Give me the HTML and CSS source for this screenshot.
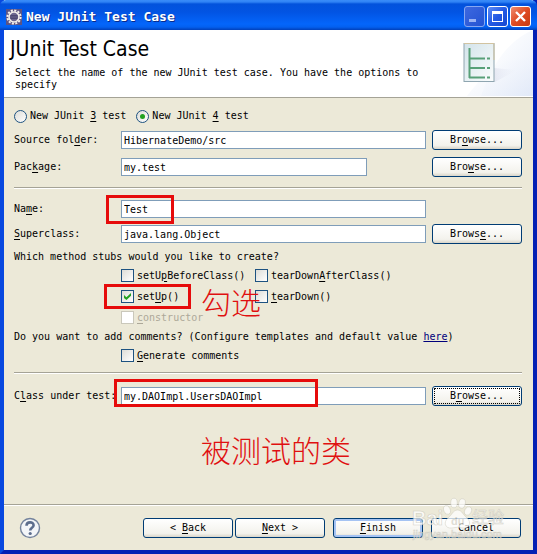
FILE: index.html
```html
<!DOCTYPE html>
<html lang="en">
  <head>
    <title>New JUnit Test Case</title>
    <meta charset="utf-8" />
    <meta name="viewport" content="width=device-width, initial-scale=1.0" />
    <link rel="stylesheet" href="styles.css">
  </head>
  <body>
    <div class="window">
      <div class="titlebar">
        <svg class="app-icon" width="16" height="16" viewBox="0 0 16 16" aria-hidden="true">
          <rect width="16" height="16" fill="#5c5484" />
          <circle cx="8" cy="8" r="6.6" fill="none" stroke="#f4f0ec" stroke-width="2" stroke-dasharray="2.1 1.356" />
          <circle cx="8" cy="8" r="5" fill="#6d6790" stroke="#f4f0ec" stroke-width="1.6" />
          <path d="M4.500 6.500h7M4 8h8M4.500 9.500h7" stroke="#45406b" stroke-width="0.8" />
        </svg>
        <span class="title">New JUnit Test Case</span>
        <div class="window-buttons">
          <button class="win-btn minimize" type="button" aria-label="Minimize">
            <svg width="19" height="19" viewBox="0 0 19 19"><rect x="4" y="12" width="7" height="3" fill="#9cb4f4" /></svg>
          </button>
          <button class="win-btn" type="button" aria-label="Maximize">
            <svg width="19" height="19" viewBox="0 0 19 19"><path d="M4 4h11v11H4zM5 7v7h9V7z" fill="#fff" fill-rule="evenodd" /></svg>
          </button>
          <button class="win-btn close" type="button" aria-label="Close">
            <svg width="19" height="19" viewBox="0 0 19 19"><path d="M5 5l9 9M14 5l-9 9" stroke="#fff" stroke-width="2.4" /></svg>
          </button>
        </div>
      </div>

      <div class="header">
        <div class="header-text">
          <h1>JUnit Test Case</h1>
          <p>Select the name of the new JUnit test case. You have the options to specify</p>
        </div>
        <svg class="banner" width="80" height="66" viewBox="0 0 80 66" aria-hidden="true">
          <defs>
            <linearGradient id="swoosh" x1="0" y1="0" x2="1" y2="1">
              <stop offset="0.2" stop-color="#fff" />
              <stop offset="1" stop-color="#dde6f7" />
            </linearGradient>
            <linearGradient id="page" x1="0" y1="0" x2="1" y2="1">
              <stop offset="0" stop-color="#d3e3ea" />
              <stop offset="1" stop-color="#fbfdfd" />
            </linearGradient>
            <linearGradient id="shade" x1="0" y1="0" x2="1" y2="0">
              <stop offset="0" stop-color="#b9b9cf" />
              <stop offset="1" stop-color="#e6ebf7" stop-opacity="0" />
            </linearGradient>
          </defs>
          <path d="M80 0Q46 14 28 66H80Z" fill="url(#swoosh)" opacity="0.7" />
          <path d="M80 21Q42 28 14 66H80Z" fill="url(#swoosh)" opacity="0.6" />
          <path d="M41 38L64 40L42 52H12Z" fill="url(#shade)" />
          <rect x="11" y="13.500" width="30" height="38" fill="url(#page)" stroke="#8fa5b0" />
          <path d="M11 13.500H41V30" fill="none" stroke="#d2c3a0" />
          <path d="M16.500 18V48M16 28.500H32M16 38H32M16 47.500H32" fill="none" stroke="#58a078" stroke-width="2" />
          <path d="M34 28.500h3M34 38h3M34 47.500h3" stroke="#58a078" stroke-width="2" />
        </svg>
      </div>

      <form class="form">
        <div class="radios">
          <label><input type="radio" name="version" />New JUnit <u>3</u> test</label>
          <label><input type="radio" name="version" checked />New JUnit <u>4</u> test</label>
        </div>

        <div class="row">
          <label for="source">Source fol<u>d</u>er:</label>
          <input type="text" id="source" value="HibernateDemo/src" />
          <button class="btn" type="button">Br<u>o</u>wse...</button>
        </div>
        <div class="row package">
          <label for="package">Pac<u>k</u>age:</label>
          <input type="text" id="package" value="my.test" />
          <button class="btn" type="button">Bro<u>w</u>se...</button>
        </div>

        <hr />

        <div class="row">
          <label for="name">Na<u>m</u>e:</label>
          <input type="text" id="name" value="Test" />
          <span class="mark mark-name"></span>
        </div>
        <div class="row superclass">
          <label for="superclass"><u>S</u>uperclass:</label>
          <input type="text" id="superclass" value="java.lang.Object" />
          <button class="btn" type="button">Brows<u>e</u>...</button>
        </div>

        <p class="question">Which method stubs would you like to create?</p>
        <div class="checks">
          <label><input type="checkbox" />setU<u>p</u>BeforeClass()</label>
          <label><input type="checkbox" />tearDown<u>A</u>fterClass()</label>
          <label><input type="checkbox" checked />set<u>U</u>p()</label>
          <label><input type="checkbox" /><u>t</u>earDown()</label>
          <label class="disabled"><input type="checkbox" disabled /><u>c</u>onstructor</label>
          <span class="mark mark-setup"></span>
          <span class="note note-tick" lang="zh">勾选</span>
        </div>

        <p class="question">Do you want to add comments? (Configure templates and default value <a href="#">here</a>)</p>
        <div class="checks">
          <label><input type="checkbox" /><u>G</u>enerate comments</label>
        </div>

        <hr />

        <div class="row tested">
          <label for="tested">C<u>l</u>ass under test:</label>
          <input type="text" id="tested" value="my.DAOImpl.UsersDAOImpl" />
          <button class="btn focused" type="button">B<u>r</u>owse...</button>
          <span class="mark mark-class"></span>
          <span class="note note-class" lang="zh">被测试的类</span>
        </div>
      </form>

      <div class="footer">
        <button class="help" type="button" aria-label="Help">
          <svg width="22" height="22" viewBox="0 0 22 22">
            <circle cx="11" cy="11" r="9.500" fill="#f3f5f8" stroke="#73829c" stroke-width="1.400" />
            <path d="M7.500 8.800C7.500 4.300 14.600 4.300 14.600 8.300C14.600 10.800 11.200 10.700 11.200 13.500" fill="none" stroke="#5c6d8d" stroke-width="2.600" />
            <circle cx="11.200" cy="16.500" r="1.600" fill="#5c6d8d" />
          </svg>
        </button>
        <div class="wizard">
          <button class="btn" type="button">&lt; <u>B</u>ack</button>
          <button class="btn" type="button"><u>N</u>ext &gt;</button>
        </div>
        <button class="btn default" type="button"><u>F</u>inish</button>
        <button class="btn" type="button">Cancel</button>
        <svg class="watermark" width="100" height="46" viewBox="0 0 100 46">
          <g fill="#fff" stroke="#c9c7bb" stroke-width="0.600">
            <text class="wm-logo" x="3" y="28">Bai</text>
            <ellipse cx="38" cy="13" rx="3.300" ry="4.500" transform="rotate(-20 38 13)" />
            <ellipse cx="45" cy="6" rx="3.300" ry="4.800" />
            <ellipse cx="53" cy="6.500" rx="3.300" ry="4.800" transform="rotate(12 53 6.500)" />
            <ellipse cx="59" cy="14" rx="3.300" ry="4.500" transform="rotate(25 59 14)" />
            <path d="M48.500 13C53 13 54 18 58 21C63 25 60 32 54 31Q48.500 29.500 43 31C36 32 34 25 39 21C43 18 44 13 48.500 13Z" />
            <text class="wm-cjk" x="63" y="26">经验</text>
            <text class="wm-url" x="4" y="41">jingyan.baidu.com</text>
          </g>
          <text class="wm-du" x="42" y="28">du</text>
        </svg>
      </div>
    </div>
  </body>
</html>
```

FILE: styles.css
```css
* {
  box-sizing: border-box;
}
body {
  margin: 0;
  background: #0a3fd0;
  color: #000;
  font: 10px / 12px "DejaVu Sans Mono", "Liberation Mono", "Noto Sans CJK SC", monospace;
}
button,
input {
  font: inherit;
  color: inherit;
  margin: 0;
}
h1,
p {
  margin: 0;
  font-weight: normal;
}
u {
  text-underline-offset: 2px;
}
svg {
  display: block;
}

.window {
  display: flex;
  flex-direction: column;
  min-height: 100vh;
  border: solid #0831d9;
  border-width: 0 4px 4px;
  border-color: #0831d9 #0420b4 #0420b4 #0848e0;
  background: #ece9d8;
}

/* title bar */
.titlebar {
  display: flex;
  align-items: center;
  height: 30px;
  margin: 0 -4px;
  padding: 3px 6px 0;
  border-radius: 6px 6px 0 0;
  background: linear-gradient(#3a8cf8 0, #2f82f5 2px, #0352dc 4px, #0254e3 12px, #0466fb 24px, #0360f0 27px, #0140ba 30px);
}
.title {
  flex: 1;
  padding-left: 4px;
  color: #fff;
  font-size: 13px;
  font-weight: bold;
  text-shadow: 1px 1px 0 #0a2a8a;
}
.window-buttons {
  display: flex;
  gap: 2px;
}
.win-btn {
  width: 21px;
  height: 21px;
  padding: 0;
  border: 1px solid #fff;
  border-radius: 3px;
  background: linear-gradient(135deg, #5f8df5, #2359e4 50%, #1648d0);
}
.win-btn.minimize {
  border-color: #86a7f2;
  background: linear-gradient(135deg, #3d68e0, #2453d2);
}
.win-btn.close {
  background: linear-gradient(135deg, #ef8d70, #df4b23 50%, #c63a10);
}

/* wizard banner */
.header {
  display: flex;
  justify-content: space-between;
  height: 68px;
  border-bottom: 1px solid #a5a396;
  background: #fff;
}
.header-text {
  padding: 7px 0 0 6px;
}
h1 {
  font: 21px / 24px "DejaVu Sans Condensed", "Noto Sans", sans-serif;
}
.header p {
  max-width: 430px;
  padding: 6px 0 0 5px;
}
.banner {
  flex: none;
}

/* form */
.form {
  flex: 1;
  padding: 8px 11px 0 10px;
}
.radios {
  display: flex;
  gap: 10px;
  height: 24px;
}
.radios label,
.checks label {
  display: flex;
  align-items: center;
  white-space: pre;
}
.radios label {
  height: 20px;
}
.row {
  position: relative;
  display: grid;
  grid-template-columns: 107px 1fr 90px;
  align-items: center;
  height: 20px;
}
input[type="text"] {
  width: 100%;
  min-width: 0;
  height: 18px;
  padding: 0 2px;
  border: 1px solid #7f9db9;
  border-radius: 0;
  background: #fff;
}
.row input[type="text"] {
  width: calc(100% - 6px);
}
.row.package {
  margin-top: 7px;
}
.row.package input {
  width: calc(100% - 65px);
}
.row.superclass {
  margin-top: 5px;
}
.row.tested {
  margin-top: 12px;
}
hr {
  height: 2px;
  margin: 10px 0;
  border: 0;
  border-top: 1px solid #a5a396;
  border-bottom: 1px solid #fff;
}
.question {
  margin: 7px 0 6px;
}
.checks {
  position: relative;
  display: grid;
  grid-template-columns: 134px 1fr;
  row-gap: 8px;
  margin-left: 107px;
}
.checks .disabled {
  color: #aca899;
}
.question a {
  color: #00007b;
}

input[type="radio"],
input[type="checkbox"] {
  appearance: none;
  width: 13px;
  height: 13px;
  margin-right: 3px;
  border: 1px solid #1d5281;
  background: linear-gradient(135deg, #dcdcd7, #fff);
}
input[type="radio"] {
  border-radius: 50%;
}
input[type="checkbox"]:disabled {
  border-color: #cac8bb;
  background: #fff;
}
input[type="radio"]:checked::before {
  content: "";
  display: block;
  width: 5px;
  height: 5px;
  margin: 3px;
  border-radius: 50%;
  background: #21a121;
}
input[type="checkbox"]:checked::before {
  content: "";
  display: block;
  width: 7px;
  height: 7px;
  margin: 2px;
  background: #21a121;
  clip-path: polygon(0 30%, 35% 60%, 100% 0, 100% 40%, 35% 100%, 0 70%);
}

.btn {
  width: 90px;
  height: 20px;
  padding: 0;
  border: 1px solid #003c74;
  border-radius: 3px;
  background: linear-gradient(#fff, #f3f2ec 80%, #d9d5c9);
  text-align: center;
}
.btn.focused {
  outline: 1px dotted #000;
  outline-offset: -3px;
}
.btn.default {
  box-shadow: inset 0 0 0 2px #a5c3f3;
}

/* red marks */
.mark {
  position: absolute;
  border: 3px solid #e60b0b;
}
.mark-name {
  top: -4px;
  left: 92px;
  width: 68px;
  height: 29px;
}
.mark-setup {
  top: 15px;
  left: -17px;
  width: 87px;
  height: 25px;
}
.mark-class {
  top: -7px;
  left: 100px;
  width: 204px;
  height: 28px;
}
.note {
  position: absolute;
  color: #e01010;
  font: 300 30px / 30px "Noto Sans CJK SC", sans-serif;
  white-space: nowrap;
}
.note-tick {
  top: 17px;
  left: 80px;
}
.note-class {
  top: 48px;
  left: 187px;
}

/* bottom bar */
.footer {
  position: relative;
  display: flex;
  align-items: center;
  gap: 8px;
  height: 46px;
  padding: 0 12px 0 15px;
  border-top: 1px solid #a5a396;
  box-shadow: inset 0 1px 0 #fff;
}
.help {
  margin-right: auto;
  padding: 0;
  border: 0;
  background: none;
}
.wizard {
  display: flex;
  gap: 2px;
}
.watermark {
  position: absolute;
  right: 24px;
  top: -8px;
  opacity: 0.75;
  pointer-events: none;
}
.wm-logo {
  font: bold 20px "Liberation Sans", sans-serif;
}
.wm-cjk {
  font: 16px "Noto Sans CJK SC", sans-serif;
}
.wm-url {
  font: 11px "Liberation Sans", sans-serif;
}
.wm-du {
  font: bold 11px "Liberation Sans", sans-serif;
  fill: #d5d3c8;
}
```
